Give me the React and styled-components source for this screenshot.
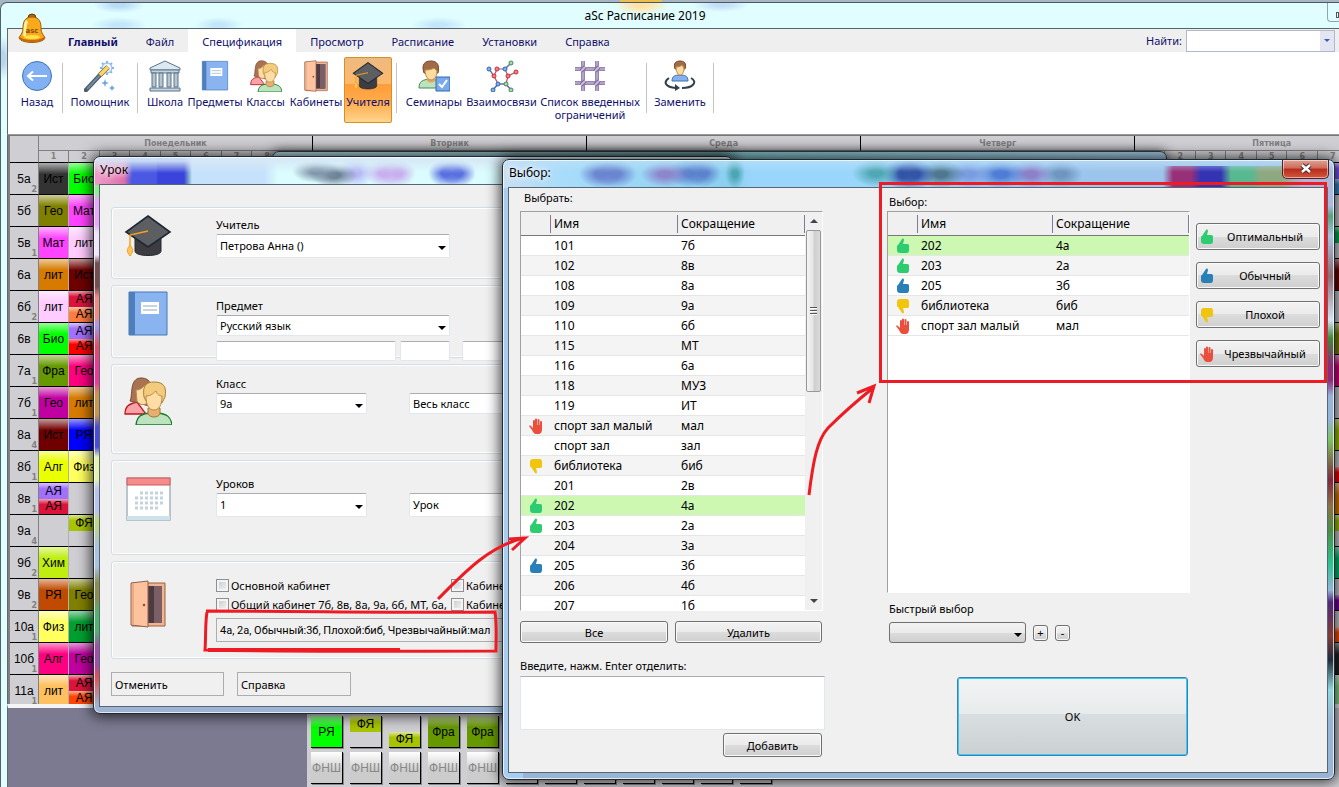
import React from 'react';
import styled, { createGlobalStyle, css } from 'styled-components';

const GlobalStyle = createGlobalStyle`
  * {
    box-sizing: border-box;
  }
  body {
    margin: 0;
    font-family: "Noto Sans", "Open Sans", sans-serif;
    font-size: 11px;
    color: #000;
  }
  button, input, select, textarea {
    font: inherit;
    color: inherit;
    margin: 0;
  }
`

// soft spot of colour seen through the window glass
const spot = (x, y, rx, ry, color) =>
    `radial-gradient(ellipse ${rx}px ${ry}px at ${x}px ${y}px, ${color} 0, ${color} 25%, transparent 100%)`;

/* ---------- drawings ---------- */

const CapIcon = ({ size = 48 }) => (
    <svg width={size} height={size} viewBox="0 0 48 48" aria-hidden="true">
      <path d="M11 22v17c0 6 26 6 26 0V22z" fill="#3c3c41" stroke="#222a33" />
      <path d="M24 4L46 20 24 35 2 20z" fill="#5d5e62" stroke="#1e2833" strokeWidth="1.6" />
      <path d="M24 19L6 23v12" fill="none" stroke="#f5a11e" strokeWidth="1.5" />
      <path d="M6 33c4 5 3 7 0 11-3-4-4-6 0-11z" fill="#ffc45c" stroke="#f5a11e" />
    </svg>
);

const BookIcon = ({ size = 48 }) => (
    <svg width={size} height={size} viewBox="0 0 48 48" aria-hidden="true">
      <path d="M5 2h38v43H5z" fill="#8ab4f0" stroke="#4478b8" />
      <path d="M5 2h6v43H5z" fill="#4f7fbb" />
      <path d="M17 12h18v12H17z" fill="#fff" />
      <path d="M19 16h14M19 20h14" stroke="#b6c8d4" strokeWidth="1.5" />
    </svg>
);

const PeopleIcon = ({ size = 48 }) => (
    <svg width={size} height={size} viewBox="0 0 48 48" aria-hidden="true">
      <path d="M1 37c0-8 4-10 12-12l9 12z" fill="#f9a3a8" stroke="#c0141c" strokeWidth="1.3" />
      <path d="M6 24C9 19 5 1 17 1c5 0 8 2 10 6l-2 22-11-3z" fill="#a97352" stroke="#7c4a32" />
      <path d="M12 13c5 0 7-3 9-5l3 17c-3 4-9 3-11-1z" fill="#ffdda5" stroke="#b98a4a" />
      <path d="M12 48c1-9 5-11 14-12h8c9 1 13 4 14 12z" fill="#bce2be" stroke="#137a2c" strokeWidth="1.3" />
      <path d="M24 31h12v6c-2 4-10 4-12 0z" fill="#e5b070" stroke="#a87332" />
      <path d="M20 20C18 8 23 5 30 5c9 0 13 4 11 15l-3 6H23z" fill="#f2cb7c" stroke="#a98138" />
      <path d="M22 19c6 0 8-4 10-5 1 4 4 5 6 5 0 9-3 14-8 14s-8-5-8-14z" fill="#ffdda5" stroke="#b98a4a" />
    </svg>
);

const DoorIcon = ({ size = 48 }) => (
    <svg width={size} height={size} viewBox="0 0 48 48" aria-hidden="true">
      <path d="M8 3h33v43H8z" fill="#f3b48e" stroke="#94604a" />
      <path d="M20 6h18v37H20z" fill="#4d3b42" />
      <path d="M30 6h8v37h-8z" fill="#7b5f66" />
      <path d="M7 3L24 1v46L7 45z" fill="#fdc29e" stroke="#94604a" />
      <path d="M9 4v40" stroke="#d8946e" />
      <circle cx="20" cy="25" r="1.3" fill="#94502f" />
    </svg>
);

const CalendarIcon = ({ size = 48 }) => (
    <svg width={size} height={size} viewBox="0 0 48 48" aria-hidden="true">
      <path d="M3 3h43v42H3z" fill="#fff" stroke="#a4b2bf" strokeWidth="1.5" />
      <path d="M3 41h43v4H3z" fill="#cfe2ec" />
      <path d="M3 3h43v7H3z" fill="#f58b8b" stroke="#cf5a5f" />
      <path d="M16 18h23M11 23h28M11 28h28M11 33h23" stroke="#c4d2e0" strokeWidth="3" strokeDasharray="3 2" />
    </svg>
);

const BackIcon = () => (
    <svg width="32" height="32" viewBox="0 0 32 32" aria-hidden="true">
      <circle cx="16" cy="16" r="14.5" fill="#82b1f3" stroke="#3e75b3" />
      <path d="M26 16H8M12 11.5L7 16l5 4.500" fill="none" stroke="#fff" strokeWidth="2" />
    </svg>
);

const WandIcon = () => (
    <svg width="32" height="32" viewBox="0 0 32 32" aria-hidden="true">
      <path d="M23 1v14M16 8h14M18 3l10 10M28 3L18 13" stroke="#86b4ef" strokeWidth="2" strokeDasharray="2 1" />
      <circle cx="23" cy="8" r="5" fill="#e9f4ff" stroke="#7fb0ec" />
      <path d="M2 30L17 14" stroke="#495c6c" strokeWidth="4.500" strokeLinecap="round" />
      <path d="M3 29L17 14" stroke="#75899a" strokeWidth="2" />
      <path d="M16 15l8-8" stroke="#8c6b1f" strokeWidth="5" />
      <path d="M16 15l8-8" stroke="#fbd66e" strokeWidth="3.500" />
      <path d="M21 19l1 3 3 1-3 1-1 3-1-3-3-1 3-1zM28 25l1 2 2 1-2 1-1 2-1-2-2-1 2-1z" fill="#6ea4ea" />
    </svg>
);

const SchoolIcon = () => (
    <svg width="34" height="32" viewBox="0 0 34 32" aria-hidden="true">
      <path d="M2 10v-2L17 1l15 7v2z" fill="#dce9f2" stroke="#5a7286" />
      <path d="M3 10h28v3H3zM2 28h30v3H2z" fill="#c3d4e0" stroke="#5a7286" />
      <path d="M4 13h4v14H4zM11 13h4v14h-4zM19 13h4v14h-4zM26 13h4v14h-4z" fill="#b4c6d3" stroke="#5a7286" />
    </svg>
);

const SeminarIcon = () => (
    <svg width="32" height="32" viewBox="0 0 32 32" aria-hidden="true">
      <path d="M1 28c0-7 4-8 10-9h4c4 1 7 3 8 9z" fill="#bce2be" stroke="#438a58" />
      <path d="M6 13C3 4 7 1 13 1s9 4 7 12z" fill="#a06b45" stroke="#74482d" />
      <path d="M9 18h8v3c-2 2-6 2-8 0z" fill="#e5a862" />
      <path d="M7 10c4 0 8-1 9-2l3 3c0 6-3 9-6 9s-6-4-6-10z" fill="#ffdb9e" stroke="#b98a4a" />
      <path d="M18 17h14v14H18z" fill="#78a9ee" stroke="#3268ad" />
      <path d="M21 24l3 3 5-7" fill="none" stroke="#fff" strokeWidth="2" />
    </svg>
);

const NetIcon = () => (
    <svg width="34" height="32" viewBox="0 0 34 32" aria-hidden="true">
      <path d="M4 9l5 7 4 8-5 6M9 16l3-7M20 9l3 7 8-4M23 16l-2 8M13 24h8l5 6M20 9l6-6" fill="none" stroke="#b5566a" strokeWidth="1.2" />
      <path d="M12 9h8M13 24l-5 6M4 9l5 7M20 9l6-6M13 24h8l5 6" fill="none" stroke="#4a7cb8" strokeWidth="1.2" />
      <g fill="#7db0f5" stroke="#3169a9"><circle cx="4" cy="9" r="2" /><circle cx="20" cy="9" r="2" /><circle cx="13" cy="24" r="2" /><circle cx="8" cy="30" r="2" /></g>
      <g fill="#f57f83" stroke="#cc2b34"><circle cx="12" cy="9" r="2" /><circle cx="9" cy="16" r="2" /><circle cx="23" cy="16" r="2" /><circle cx="31" cy="12" r="2" /></g>
      <g fill="#a9d9b4" stroke="#3d8a55"><circle cx="26" cy="3" r="2" /><circle cx="21" cy="24" r="2" /><circle cx="26" cy="30" r="2" /></g>
    </svg>
);

const GridIcon = () => (
    <svg width="32" height="32" viewBox="0 0 32 32" aria-hidden="true">
      <path d="M9 1v30M23 1v30M1 9h30M1 23h30" stroke="#9583b0" strokeWidth="4" />
      <path d="M9 1v30M23 1v30M1 9h30M1 23h30" stroke="#b5a3cb" strokeWidth="2" />
      <path d="M7 11l4-4M21 11l4-4M7 25l4-4M21 25l4-4" stroke="#7a6796" strokeWidth="4" />
      <path d="M7 11l4-4M21 11l4-4M7 25l4-4M21 25l4-4" stroke="#cbbbdc" strokeWidth="2" />
    </svg>
);

const ReplaceIcon = () => (
    <svg width="32" height="32" viewBox="0 0 32 32" aria-hidden="true">
      <path d="M8 21c0-5 3-6 8-6s8 1 8 6z" fill="#86b1f0" stroke="#3d6fae" />
      <path d="M11 9c-2-6 1-8 5-8s7 2 5 8z" fill="#a06b45" stroke="#74482d" />
      <path d="M12 7c3 0 5-1 6-2l2 3c0 5-2 7-4 7s-4-3-4-8z" fill="#ffdb9e" stroke="#b98a4a" />
      <path d="M5 18c-6 4-4 9 7 10M27 18c7 4 2 10-9 10" fill="none" stroke="#33414e" strokeWidth="2" />
      <path d="M11 24l5 4-5 3z" fill="#33414e" />
    </svg>
);

const BellIcon = () => (
    <svg width="28" height="32" viewBox="0 0 28 32" aria-hidden="true">
      <circle cx="14" cy="5" r="4" fill="#b46c08" stroke="#5c3206" />
      <path d="M14 4c-8 0-9 6-9 11 0 6-3 7-4 10 2 6 24 6 26 0-1-3-4-4-4-10 0-5-1-11-9-11z" fill="#f9a91a" stroke="#a05c06" />
      <path d="M9 8c-3 4-1 11-3 15" fill="none" stroke="#fff3a0" strokeWidth="3" />
      <path d="M2 25c4 4 20 4 24 0" fill="none" stroke="#c2690c" strokeWidth="2" />
      <ellipse cx="14" cy="24" rx="8" ry="2" fill="#ffe04a" />
      <text x="14" y="20" textAnchor="middle" fontSize="7" fontWeight="bold" fontFamily="DejaVu Sans" fill="#8a5208">asc</text>
    </svg>
);

const Thumb = ({ color, down }) => (
    <svg width="14" height="16" viewBox="0 0 14 16" aria-hidden="true">
      <path
        transform={down ? 'matrix(1 0 0 -1 0 16)' : undefined}
        d="M1 9c0-1 0-2 1-2l2-3 2-3c1-1 2 0 2 1L7 6h4c2 0 2 1 2 2v4c0 2-1 3-2 3H4c-2 0-3-1-3-3z"
        fill={color}
      />
    </svg>
);

const HandIcon = () => (
    <svg width="14" height="16" viewBox="0 0 14 16" aria-hidden="true">
      <path d="M5 9V3M7 9V1.500M9.500 9V2M12 9V4" stroke="#ea4f3d" strokeWidth="2" strokeLinecap="round" />
      <path d="M4 7h9v4c0 3-1 5-4 5H7c-2 0-3-2-4-4L0 8c1-1 2 0 3 1l1 1z" fill="#ea4f3d" />
    </svg>
);

const marks = {
    best: <Thumb color="#2ecc71" />,
    usual: <Thumb color="#2980b9" />,
    bad: <Thumb color="#f1c40f" down />,
    stop: <HandIcon />,
};

/* ---------- main window ---------- */

const Desktop = styled.main`
  position: relative;
  display: flex;
  flex-direction: column;
  height: 100vh;
  overflow: hidden;
  padding-top: 2px;
  background: linear-gradient(90deg, #a7b5c4 0 620px, #edbd55 620px 662px, #a7b5c4 662px);
`
const MainWindow = styled.section`
  flex: 1;
  min-height: 0;
  display: flex;
  flex-direction: column;
  padding-left: 6px;
  border-left: 1px solid #555f66;
  border-top: 1px solid #4d5960;
  border-top-left-radius: 7px;
  background:
    ${spot(118, 2, 26, 8, '#b9dcf6')},
    ${spot(118, 22, 28, 8, '#c3e6fa')},
    ${spot(218, 22, 24, 8, '#c3e6fa')},
    ${spot(438, 22, 28, 8, '#c3e6fa')},
    ${spot(640, 2, 28, 10, '#ffe3a6')},
    ${spot(720, 2, 28, 7, '#c3dff8')},
    ${spot(2, 55, 8, 22, '#b5d4ee')},
    #e0feff;
`
const TitleBar = styled.header`
  position: relative;
  display: flex;
  align-items: center;
  justify-content: center;
  height: 25px;
  padding-right: 56px;
  font-size: 12px;
  flex-shrink: 0;
`
const WinButton = styled.button`
  position: absolute;
  right: 0;
  top: 0;
  width: 12px;
  height: 19px;
  border: 1px solid #93a5a8;
  border-width: 0 0 1px 1px;
  border-bottom-left-radius: 4px;
  background: none;
  padding: 0;
  &::after {
    content: '';
    display: block;
    margin: 6px 0 0 8px;
    height: 4px;
    border: 1px solid #555;
  }
`
const Logo = styled.div`
  position: absolute;
  left: 18px;
  top: 13px;
`
const MenuBar = styled.nav`
  display: flex;
  flex-shrink: 0;
  height: 24px;
  padding-left: 46px;
  border-top: 1px solid #566;
  border-left: 1px solid #666;
  background: #efefef;
  color: #10106c;
  font-size: 11px;
`
const MenuTab = styled.button`
  padding: 2px 14px 0;
  border: 0;
  background: ${(props) => (props.$active ? '#fff' : 'transparent')};
  font-weight: ${(props) => (props.$bold ? 'bold' : 'normal')};
`
const Search = styled.div`
  display: flex;
  align-items: center;
  margin-left: auto;
  margin-right: 4px;
  gap: 4px;
`
const SearchBox = styled.span`
  display: flex;
  width: 149px;
  height: 22px;
  border: 1px solid #b0b8cc;
  background: #fff;
  input {
    flex: 1;
    min-width: 0;
    border: 0;
    outline: 0;
  }
  button {
    width: 14px;
    padding: 0;
    border: 0;
    background: #e3e6f2;
    display: grid;
    place-items: center;
  }
`
const Ribbon = styled.div`
  display: flex;
  flex-shrink: 0;
  height: 83px;
  padding: 5px 0 0 6px;
  border-left: 1px solid #666;
  border-bottom: 1px solid #999;
  background: #fff;
  color: #10106c;
`
const RibbonButton = styled.button`
  display: flex;
  flex-direction: column;
  align-items: center;
  gap: 2px;
  width: ${(props) => props.$width}px;
  height: 66px;
  padding: 2px 0 0;
  border: 1px solid transparent;
  background: none;
  line-height: 13px;
  span {
    width: max-content;
    max-width: 106px;
    margin-top: 1px;
  }
  ${(props) => props.$active && css`
    margin-left: 3px;
    border-color: #d79021;
    border-radius: 2px;
    background: linear-gradient(#eeb981 0, #fdb96c 40%, #ff9d3a 41%, #ffad4e 70%, #ffd48c);
  `}
`
const Divider = styled.i`
  width: 1px;
  height: 50px;
  margin: 6px ${(props) => props.$gap || 2}px 0;
  background: #c4c4c4;
`
const Caret = styled.i`
  width: 0;
  height: 0;
  border: ${(props) => props.$size || 4}px solid transparent;
  border-bottom-width: 0;
  border-top-color: ${(props) => props.$color || '#000'};
`

/* ---------- timetable ---------- */

const Board = styled.div`
  flex-shrink: 0;
  height: 569px;
  padding-left: 2px;
  overflow: hidden;
  border-left: 1px solid #666;
  border-top: 1px solid #777;
  background: #808080;
`
const Timetable = styled.table`
  width: 1399px;
  table-layout: fixed;
  border-collapse: separate;
  border-spacing: 0;
  background: #cfced3;
  font-family: "Liberation Sans", Arial, sans-serif;
  font-size: 12px;
  th, td {
    padding: 0;
  }
`
const DayHead = styled.th`
  height: 15px;
  border-right: 1px solid #000;
  border-bottom: 1px solid #808080;
  font: bold 8px "DejaVu Sans", sans-serif;
  color: #808080;
`
const HourHead = styled.th`
  height: 12px;
  border-right: 1px solid #808080;
  border-bottom: 1px solid #000;
  font: bold 8px "DejaVu Sans", sans-serif;
  color: #808080;
`
const ClassHead = styled.th`
  position: relative;
  height: 32px;
  border-right: 1px solid #808080;
  border-bottom: 1px solid #000;
  font-weight: normal;
  small {
    position: absolute;
    right: 1px;
    bottom: 0;
    font: bold 8px "DejaVu Sans", sans-serif;
    color: #808080;
  }
`
const Slot = styled.td`
  height: 32px;
  border-right: 1px solid #b0b0b0;
  border-bottom: 1px solid #000;
`
const Lessons = styled.div`
  display: flex;
  flex-direction: column;
  height: 31px;
`
const Lesson = styled.div`
  flex: 1;
  display: grid;
  place-items: center;
  overflow: hidden;
  line-height: 14px;
  background: ${(props) => (props.$color ? `linear-gradient(rgba(255, 255, 255, 0.6), transparent 36%), ${props.$color}` : 'none')};
`

// each slot is a list of [subject, colour] pairs, one above the other
const timetable = [
    ['5а', 2, [['Ист', '#333']], [['Био', '#0f0']], [['', '#7a55ee'], ['', '#3a8ad0']]],
    ['5б', '', [['Гео', '#808000']], [['Мат', '#f4f']], []],
    ['5в', 1, [['Мат', '#f4f']], [['лит', '#fcf']], [['', '#00b050'], []]],
    ['6а', '', [['лит', '#d67b00']], [['Ист', '#700000']], [['', '#700000']]],
    ['6б', 2, [['лит', '#fcf']], [['АЯ', '#dc143c'], ['АЯ', '#ff7d40']], []],
    ['6в', '', [['Био', '#0f0']], [['АЯ', '#a070ff'], ['АЯ', '#f00']], [['', '#808000']]],
    ['7а', 1, [['Фра', '#669900']], [['Гео', '#ff0080']], [['', '#e0007c']]],
    ['7б', 1, [['Гео', '#c000a0']], [['лит', '#d67b00']], []],
    ['8а', 4, [['Ист', '#700000']], [['РЯ', '#00f']], [['', '#a5c400']]],
    ['8б', 1, [['Алг', '#eaff00']], [['Физ', '#ffff60']], [[], ['', '#f00']]],
    ['8в', 1, [['АЯ', '#a070ff'], ['АЯ', '#dc143c']], [], [['', '#e07b00']]],
    ['9а', 4, [], [['ФЯ', '#a8c400'], []], [['', '#a8c400'], []]],
    ['9б', 2, [['Хим', '#bfee10']], [], [['', '#00c070']]],
    ['9в', 2, [['РЯ', '#c04a00']], [['Гео', '#808000']], [[], ['', '#7a00a0']]],
    ['10а', 1, [['Физ', '#ffff60']], [['лит', '#00a030']], [[], ['', '#ff5000']]],
    ['10б', 1, [['Алг', '#ff0080']], [['Гео', '#c000a0']], [['', '#222']]],
    ['11а', 1, [['лит', '#ffc060']], [['АЯ', '#dc143c'], ['АЯ', '#ff4500']], [['', '#90d890']]],
];
const days = ['Понедельник', 'Вторник', 'Среда', 'Четверг', 'Пятница'];
const hours = [1, 2, 3, 4, 5, 6, 7, 8, 9];

const SlotCell = ({ lessons }) => (
    <Slot>
      <Lessons>
        {lessons.map(([name, color], i) => <Lesson key={i} $color={color}>{name}</Lesson>)}
      </Lessons>
    </Slot>
);

const Shelf = styled.div`
  flex: 1;
  min-height: 0;
  display: flex;
  border-top: 4px solid #f4f4f4;
  border-left: 1px solid #666;
  background: #7b7a90;
`
const CardGrid = styled.div`
  flex: 1;
  margin-left: 299px;
  padding: 8px 4px;
  display: flex;
  flex-direction: column;
  gap: 4px;
  overflow: hidden;
  background: #cfced3;
  font-family: "Liberation Sans", Arial, sans-serif;
  font-size: 12px;
`
const CardRow = styled.div`
  display: flex;
  gap: 7px;
`
const Card = styled.div`
  display: flex;
  flex-direction: column;
  width: 32px;
  height: 32px;
  flex-shrink: 0;
  border-right: 1px solid #000;
  border-bottom: 1px solid #000;
  box-shadow: 1px 1px 0 #888;
  color: ${(props) => (props.$blank ? '#888' : '#000')};
  background: ${(props) => (props.$blank ? 'linear-gradient(#fff, #ccc 60%)' : '#cfced3')};
`
const shelf = [
    [['РЯ', '#0f0']],
    [['ФЯ', '#a8c400'], []],
    [[], ['ФЯ', '#a8c400']],
    [['Фра', '#669900']],
    [['Фра', '#669900']],
];

/* ---------- dialogs ---------- */

const BackWindow = styled.div`
  position: absolute;
  left: 272px;
  top: 151px;
  width: 895px;
  height: 500px;
  border: 1px solid #2d3b45;
  border-radius: 7px 7px 0 0;
  box-shadow: 0 0 12px rgba(0, 0, 0, 0.7);
  background: linear-gradient(90deg, #b8dbe8, #7ab6bd 50%, #9dc3dc);
`
const Dialog = styled.section`
  position: absolute;
  padding: 0 6px 6px 5px;
  border: 1px solid #1f2a33;
  border-radius: 7px;
  box-shadow: inset 0 0 0 1px rgba(255, 255, 255, 0.7), 0 0 14px 2px rgba(0, 0, 0, 0.75);
`
const LessonDialog = styled(Dialog)`
  left: 93px;
  top: 156px;
  width: 640px;
  background:
    linear-gradient(rgba(214, 232, 246, 0.9) 4px, rgba(214, 232, 246, 0) 16px) 0 0 / 100% 28px no-repeat,
    ${spot(222, 14, 24, 12, '#8296aa')},
    ${spot(240, 18, 24, 12, '#6f8298')},
    ${spot(262, 15, 18, 16, '#b6b8f6')},
    ${spot(290, 16, 20, 14, '#c8b0ee')},
    ${spot(304, 16, 18, 14, '#c8b0ee')},
    ${spot(352, 16, 18, 14, '#5a70e0')},
    ${spot(364, 16, 18, 14, '#5a70e0')},
    linear-gradient(90deg, #ec9ac8 4px, #e070ac 30px, #4b58e4 38px 62px, #3a44dc 64px 90px, transparent 98px) 0 0 / 100% 28px no-repeat,
    linear-gradient(90deg, transparent 90px, #c5e1fb 98px 170px, #dcfdff 184px 400px) 0 0 / 100% 28px no-repeat,
    linear-gradient(#d6dbe8 6px, #8cf08c 20px 36px, #e8a8f8 42px 68px, #f3e4fb 76px 98px, #7a4d4d 106px 130px,
      #ee8b80 140px 160px, #a99aee 168px, #e05060 190px, #ee3a96 208px 226px, #c99650 236px 258px,
      #4a4ae0 270px 290px, #e6f3b0 300px 322px, #b8c4ee 332px 354px, #c3d878 364px, #a9c2dd 390px 410px,
      #8d8d50 426px 442px, #50b470 456px 474px, #a050a8 490px 508px, #e05050 520px, #9fb4d2 548px);
`
const PickDialog = styled(Dialog)`
  left: 502px;
  right: 4px;
  top: 159px;
  background:
    linear-gradient(rgba(190, 225, 248, 0.7), rgba(190, 225, 248, 0) 12px) 0 0 / 100% 28px no-repeat,
    ${spot(98, 14, 22, 14, '#6a86d0')},
    ${spot(112, 14, 22, 14, '#6a86d0')},
    ${spot(162, 14, 24, 13, '#8c86cc')},
    ${spot(186, 13, 22, 14, '#5b83cc')},
    ${spot(200, 13, 18, 14, '#5b83cc')},
    ${spot(232, 13, 10, 16, '#4ba5b2')},
    ${spot(373, 13, 24, 14, '#50a8b4')},
    ${spot(400, 14, 20, 15, '#3355a8')},
    ${spot(412, 14, 20, 15, '#3355a8')},
    ${spot(438, 14, 24, 14, '#4f7890')},
    ${spot(466, 14, 24, 14, '#7a9ce0')},
    ${spot(498, 14, 26, 14, '#4f7cd4')},
    ${spot(528, 14, 22, 14, '#8c80c8')},
    ${spot(558, 14, 22, 14, '#6e96be')},
    linear-gradient(90deg, transparent 660px, #983078 670px 688px, #3333b4 698px 718px, #58b890 728px 748px, #90a880 758px 778px, #b9aed8 800px, #a9b9d8) 0 6px / 100% 22px no-repeat,
    linear-gradient(90deg, #c9def2, #a8dcfa 60px, #8acff0 230px, #9ad6fc 250px 360px, #9cc4ec 600px, #9cc4ec) 0 0 / 100% 28px no-repeat,
    linear-gradient(#a9cdf0, #a9cdf0) 0 0 / 20px 100% no-repeat,
    linear-gradient(#a9bce0 46px, #58a07c 56px, #a9c4e0 76px, #8d6a74 116px, #d6e4f4 160px, #40883a 178px, #90287c 206px 220px,
      #96b4d6 236px 260px, #80c060 280px, #80283c 320px, #8c7048 346px, #4c8c40 370px, #2cc490 404px, #96b4d6 430px,
      #502878 442px, #803c38 476px, #202c3c 500px, #92d8dc 530px, #9ab4d4 560px);
`
const DialogTitle = styled.h2`
  height: 27px;
  margin: 0;
  padding: 5px 0 0 1px;
  font-size: 12px;
  font-weight: normal;
  line-height: 16px;
  text-shadow: 0 0 6px #fff, 0 0 6px #fff;
`
const CloseButton = styled.button`
  position: absolute;
  right: 5px;
  top: 0;
  width: 47px;
  height: 19px;
  padding: 0;
  border: 1px solid #53202a;
  border-top: 0;
  border-radius: 0 0 5px 5px;
  box-shadow: inset 0 0 0 1px rgba(255, 255, 255, 0.5);
  background: linear-gradient(#e0a194, #cf6a59 45%, #b52d1b 50%, #d4573b);
`
const Client = styled.div`
  border: 1px solid #566672;
  background: #f0f0f0;
`
const LessonForm = styled(Client)`
  padding: 22px 11px 10px;
`
const Group = styled.fieldset`
  display: flex;
  height: ${(props) => props.$height}px;
  margin: 0 0 6px;
  padding: 0 0 0 12px;
  border: 1px solid #d3dde6;
  border-radius: 3px;
  box-shadow: inset 0 0 0 1px #fff;
  min-width: 0;
`
const GroupIcon = styled.div`
  width: 92px;
  padding-top: ${(props) => props.$top || 4}px;
`
const Fields = styled.div`
  padding-top: ${(props) => props.$top}px;
  label {
    display: block;
    line-height: 15px;
    margin-bottom: 2px;
  }
`
const FieldRow = styled.div`
  display: flex;
  gap: ${(props) => props.$gap || 42}px;
`
const SelectWrap = styled.span`
  position: relative;
  display: block;
  width: ${(props) => props.$width}px;
  select {
    appearance: none;
    display: block;
    width: 100%;
    height: ${(props) => props.$height || 21}px;
    padding: 0 16px 1px 3px;
    border: 1px solid #e2e6ee;
    border-top-color: #abadb3;
    border-radius: 2px;
    background: #fff;
    ${(props) => props.$raised && css`
      border: 1px solid #707070;
      border-radius: 3px;
      background: linear-gradient(#f2f2f2, #ebebeb 50%, #dcdcdc 50%, #cfcfcf);
    `}
  }
  ${Caret} {
    position: absolute;
    right: 4px;
    top: 50%;
  }
`
const TextField = styled.input`
  width: ${(props) => props.$width}px;
  height: 20px;
  margin-top: 5px;
  border: 1px solid #e2e6ee;
  border-top-color: #abadb3;
  border-radius: 2px;
  background: #fff;
`
const Check = styled.div`
  display: flex;
  align-items: center;
  gap: 2px;
  width: 234px;
  height: 19px;
  overflow: hidden;
  white-space: nowrap;
  label {
    margin: 0;
  }
  input {
    appearance: none;
    flex-shrink: 0;
    width: 13px;
    height: 13px;
    border: 1px solid #8e8f8f;
    background: linear-gradient(135deg, #c4c8cd, #f6f6f6);
    box-shadow: inset 0 0 0 2px #f4f4f4;
  }
`
const FlatButton = styled.button`
  width: ${(props) => props.$width}px;
  height: 24px;
  padding: 0 3px;
  border: 1px solid #adadad;
  background: #f0f0f0;
  text-align: left;
  white-space: nowrap;
`
const RoomsButton = styled(FlatButton)`
  margin-top: 4px;
  font-family: Roboto, sans-serif;
`
const Footer = styled.div`
  display: flex;
  gap: 13px;
  padding-top: 7px;
`
const Button = styled.button`
  display: flex;
  align-items: center;
  justify-content: center;
  width: ${(props) => props.$width}px;
  height: ${(props) => props.$height || 22}px;
  padding: 0;
  border: 1px solid #707070;
  border-radius: 3px;
  box-shadow: inset 0 0 0 1px #fafafa;
  background: linear-gradient(#f2f2f2, #ebebeb 50%, #dcdcdc 50%, #cfcfcf);
`
const MarkButton = styled(Button)`
  padding: 0 3px;
  span {
    flex: 1;
    text-align: center;
  }
`
const OkButton = styled(Button)`
  margin: 34px 0 0 70px;
  border-color: #3c7fb1;
  box-shadow: inset 0 0 0 1px #35cbf5;
  background: linear-gradient(#f2f4f4, #e8ebec 47%, #d9dfe1 47%, #cbd1d3);
`
const PickForm = styled(Client)`
  display: flex;
  align-items: flex-start;
  gap: 63px;
  padding: 3px 6px 15px 11px;
`
const Column = styled.div`
  display: flex;
  flex-direction: column;
  width: ${(props) => props.$width || 'auto'};
  padding-top: ${(props) => props.$top || 0}px;
  flex-shrink: 0;
`
const Caption = styled.label`
  display: block;
  height: 14px;
  line-height: 14px;
  margin: ${(props) => props.$space || '0'};
`
const ListBox = styled.div`
  display: flex;
  width: 303px;
  height: ${(props) => props.$height}px;
  overflow: hidden;
  border: 1px solid #a0a0a0;
  border-right-color: #fff;
  border-bottom-color: #fff;
  background: #fff;
`
const Rooms = styled.table`
  flex: 1;
  align-self: flex-start;
  table-layout: fixed;
  border-collapse: separate;
  border-spacing: 0;
  font-size: 12px;
  th {
    height: 24px;
    padding: 2px 0;
    border-bottom: 1px solid #777;
    background: #f0f0f0;
    font-size: 12px;
    font-weight: normal;
    text-align: left;
  }
  th span {
    display: block;
    height: 18px;
    padding-left: 3px;
    border-left: 1px solid #7e7a9e;
    line-height: 18px;
  }
  th:last-child span {
    border-right: 1px solid #7e7a9e;
  }
  td {
    height: 20px;
    padding: 0 0 0 4px;
    border-bottom: 1px solid #e6e6e6;
    line-height: 19px;
    white-space: nowrap;
  }
  td:first-child {
    padding-left: 8px;
  }
  svg {
    display: block;
  }
`
const RoomRow = styled.tr`
  background: #fff;
  &:nth-child(even) {
    background: #f4f4f4;
  }
  &&[aria-selected='true'] {
    background: #ccf8b2;
  }
`
const ScrollBar = styled.div`
  display: flex;
  flex-direction: column;
  align-items: center;
  width: 17px;
  padding: 0 1px;
  background: #f0f0f0;
  button {
    display: grid;
    place-items: center;
    width: 15px;
    height: 18px;
    padding: 0;
    border: 0;
    background: none;
  }
  button:first-child i {
    transform: rotate(180deg);
  }
  button:last-child {
    margin-top: auto;
  }
`
const ScrollThumb = styled.div`
  display: grid;
  place-items: center;
  width: 15px;
  height: 162px;
  border: 1px solid #979797;
  border-radius: 2px;
  background: linear-gradient(90deg, #f4f4f4, #e6e6e6 45%, #cfcfcf 55%, #dadada);
  &::after {
    content: '';
    width: 7px;
    height: 8px;
    background: repeating-linear-gradient(#555 0 1px, #fff 1px 2px, transparent 2px 3px);
  }
`
const Row = styled.div`
  display: flex;
  gap: ${(props) => props.$gap || 7}px;
  align-items: ${(props) => props.$align || 'stretch'};
  margin-top: ${(props) => props.$top || 0}px;
`
const QuickRow = styled(Row)`
  padding-left: 2px;
`
const Marks = styled.div`
  display: flex;
  flex-direction: column;
  gap: 12px;
  padding-top: 12px;
`
const Notes = styled.textarea`
  display: block;
  width: 305px;
  height: 54px;
  margin-bottom: 3px;
  border: 1px solid #e2e6ee;
  border-top-color: #abadb3;
  resize: none;
`
const AddButton = styled(Button)`
  align-self: flex-end;
  margin-right: 2px;
`
const Markup = styled.svg`
  position: absolute;
  left: 0;
  top: 0;
  width: 1339px;
  height: 787px;
  pointer-events: none;
`

const allRooms = [
    ['101', '7б'], ['102', '8в'], ['108', '8а'], ['109', '9а'], ['110', '6б'],
    ['115', 'МТ'], ['116', '6а'], ['118', 'МУЗ'], ['119', 'ИТ'],
    ['спорт зал малый', 'мал', 'stop'],
    ['спорт зал', 'зал'],
    ['библиотека', 'биб', 'bad'],
    ['201', '2в'],
    ['202', '4а', 'best'],
    ['203', '2а', 'best'],
    ['204', '3а'],
    ['205', '3б', 'usual'],
    ['206', '4б'],
    ['207', '1б'],
];
const chosenRooms = [
    ['202', '4а', 'best'],
    ['203', '2а', 'best'],
    ['205', '3б', 'usual'],
    ['библиотека', 'биб', 'bad'],
    ['спорт зал малый', 'мал', 'stop'],
];

const RoomTable = ({ rooms, nameWidth }) => (
    <Rooms>
      <colgroup><col style={{ width: 29 }} /><col style={{ width: nameWidth }} /><col /></colgroup>
      <thead>
        <tr><th /><th><span>Имя</span></th><th><span>Сокращение</span></th></tr>
      </thead>
      <tbody>
        {rooms.map(([name, short, mark]) => (
          <RoomRow key={name} aria-selected={name === '202'}>
            <td>{marks[mark]}</td><td>{name}</td><td>{short}</td>
          </RoomRow>
        ))}
      </tbody>
    </Rooms>
);

const Select = ({ id, label, width, height, value, raised }) => (
    <SelectWrap $width={width} $height={height} $raised={raised}>
      <select id={id} aria-label={label} defaultValue={value}><option>{value}</option></select>
      <Caret />
    </SelectWrap>
);

const CheckBox = ({ id, children }) => (
    <Check><input type="checkbox" id={id} /><label htmlFor={id}>{children}</label></Check>
);

const LessonWindow = () => (
    <LessonDialog>
      <DialogTitle>Урок</DialogTitle>
      <LessonForm>
        <Group $height={72}>
          <GroupIcon><CapIcon /></GroupIcon>
          <Fields $top={9}>
            <label htmlFor="teacher">Учитель</label>
            <Select id="teacher" width={234} height={24} value="Петрова Анна ()" />
          </Fields>
        </Group>
        <Group $height={73}>
          <GroupIcon><BookIcon /></GroupIcon>
          <Fields $top={12}>
            <label htmlFor="subject">Предмет</label>
            <Select id="subject" width={234} value="Русский язык" />
            <FieldRow $gap={4}>
              <TextField $width={180} aria-label="Длина" />
              <TextField $width={50} aria-label="Число" />
              <TextField $width={60} aria-label="Неделя" style={{ marginLeft: 8 }} />
            </FieldRow>
          </Fields>
        </Group>
        <Group $height={90}>
          <GroupIcon $top={12}><PeopleIcon /></GroupIcon>
          <Fields $top={11}>
            <label htmlFor="class">Класс</label>
            <FieldRow>
              <Select id="class" width={151} value="9а" />
              <Select label="Группа" width={108} value="Весь класс" />
            </FieldRow>
          </Fields>
        </Group>
        <Group $height={95}>
          <GroupIcon $top={14}><CalendarIcon /></GroupIcon>
          <Fields $top={15}>
            <label htmlFor="count">Уроков</label>
            <FieldRow>
              <Select id="count" width={151} height={24} value="1" />
              <Select label="Длительность" width={108} height={24} value="Урок" />
            </FieldRow>
          </Fields>
        </Group>
        <Group $height={98}>
          <GroupIcon $top={18}><DoorIcon /></GroupIcon>
          <Fields $top={14}>
            <FieldRow $gap={1}>
              <CheckBox id="own">Основной кабинет</CheckBox>
              <CheckBox id="class-room">Кабинет класса</CheckBox>
            </FieldRow>
            <FieldRow $gap={1}>
              <CheckBox id="shared">Общий кабинет 7б, 8в, 8а, 9а, 6б, МТ, 6а,</CheckBox>
              <CheckBox id="teacher-room">Кабинет учителя</CheckBox>
            </FieldRow>
            <RoomsButton $width={300}>4а, 2а, Обычный:3б, Плохой:биб, Чрезвычайный:мал</RoomsButton>
          </Fields>
        </Group>
        <Footer>
          <FlatButton $width={113}>Отменить</FlatButton>
          <FlatButton $width={114}>Справка</FlatButton>
        </Footer>
      </LessonForm>
    </LessonDialog>
);

const PickWindow = () => (
    <PickDialog>
      <DialogTitle>Выбор:</DialogTitle>
      <CloseButton aria-label="Закрыть">
        <svg width="14" height="11" viewBox="0 0 14 11">
          <path d="M3 2l8 7M11 2L3 9" stroke="#4a2a2a" strokeWidth="4.500" />
          <path d="M3 2l8 7M11 2L3 9" stroke="#fff" strokeWidth="2.500" />
        </svg>
      </CloseButton>
      <PickForm>
        <Column $width="304px">
          <Caption as="div" $space="0 0 6px 4px">Выбрать:</Caption>
          <ListBox $height={400}>
            <RoomTable rooms={allRooms} nameWidth={127} />
            <ScrollBar>
              <button aria-label="Вверх"><Caret $color="#444" /></button>
              <ScrollThumb />
              <button aria-label="Вниз"><Caret $color="#444" /></button>
            </ScrollBar>
          </ListBox>
          <Row $top={10}>
            <Button $width={148}>Все</Button>
            <Button $width={147}>Удалить</Button>
          </Row>
          <Caption htmlFor="names" $space="16px 0 3px 0">Введите, нажм. Enter отделить:</Caption>
          <Notes id="names" />
          <AddButton $width={99} $height={24}>Добавить</AddButton>
        </Column>
        <Column $top={4}>
          <Caption as="div" $space="0 0 2px 2px">Выбор:</Caption>
          <Row $gap={6}>
            <ListBox $height={382}>
              <RoomTable rooms={chosenRooms} nameWidth={135} />
            </ListBox>
            <Marks>
              <MarkButton $width={124} $height={27}>{marks.best}<span>Оптимальный</span></MarkButton>
              <MarkButton $width={124} $height={27}>{marks.usual}<span>Обычный</span></MarkButton>
              <MarkButton $width={124} $height={27}>{marks.bad}<span>Плохой</span></MarkButton>
              <MarkButton $width={124} $height={27}>{marks.stop}<span>Чрезвычайный</span></MarkButton>
            </Marks>
          </Row>
          <Caption htmlFor="quick" $space="9px 0 6px 2px">Быстрый выбор</Caption>
          <QuickRow $align="center">
            <Select id="quick" width={137} value="" raised />
            <Button $width={15} $height={16}>+</Button>
            <Button $width={15} $height={16}>-</Button>
          </QuickRow>
          <OkButton $width={231} $height={79}>OK</OkButton>
        </Column>
      </PickForm>
    </PickDialog>
);

const App = () => {
    return (
    <>
      <GlobalStyle />
      <Desktop>
        <MainWindow>
          <TitleBar>aSc Расписание 2019<WinButton aria-label="Свернуть" /></TitleBar>
          <MenuBar>
            <MenuTab $bold>Главный</MenuTab>
            <MenuTab>Файл</MenuTab>
            <MenuTab $active>Спецификация</MenuTab>
            <MenuTab>Просмотр</MenuTab>
            <MenuTab>Расписание</MenuTab>
            <MenuTab>Установки</MenuTab>
            <MenuTab>Справка</MenuTab>
            <Search>
              <label htmlFor="find">Найти:</label>
              <SearchBox>
                <input id="find" />
                <button aria-label="Открыть список"><Caret $size={3} $color="#3a62ac" /></button>
              </SearchBox>
            </Search>
          </MenuBar>
          <Ribbon>
            <RibbonButton $width={46}><BackIcon /><span>Назад</span></RibbonButton>
            <Divider />
            <RibbonButton $width={70}><WandIcon /><span>Помощник</span></RibbonButton>
            <Divider />
            <RibbonButton $width={50}><SchoolIcon /><span>Школа</span></RibbonButton>
            <RibbonButton $width={50}><BookIcon size={32} /><span>Предметы</span></RibbonButton>
            <RibbonButton $width={51}><PeopleIcon size={32} /><span>Классы</span></RibbonButton>
            <RibbonButton $width={50}><DoorIcon size={32} /><span>Кабинеты</span></RibbonButton>
            <RibbonButton $width={48} $active><CapIcon size={32} /><span>Учителя</span></RibbonButton>
            <Divider $gap={4} />
            <RibbonButton $width={66}><SeminarIcon /><span>Семинары</span></RibbonButton>
            <RibbonButton $width={69}><NetIcon /><span>Взаимосвязи</span></RibbonButton>
            <RibbonButton $width={108}><GridIcon /><span>Список введенных<br />ограничений</span></RibbonButton>
            <Divider />
            <RibbonButton $width={62}><ReplaceIcon /><span>Заменить</span></RibbonButton>
            <Divider />
          </Ribbon>
          <Board>
            <Timetable>
              <colgroup>
                <col style={{ width: 29 }} />
                {days.map((day) => hours.map((h) => <col key={day + h} style={{ width: h % 2 ? 30 : 31 }} />))}
              </colgroup>
              <thead>
                <tr>
                  <HourHead rowSpan={2} />
                  {days.map((day) => <DayHead key={day} colSpan={9}>{day}</DayHead>)}
                </tr>
                <tr>
                  {days.map((day) => hours.map((h) => <HourHead key={day + h}>{h}</HourHead>))}
                </tr>
              </thead>
              <tbody>
                {timetable.map(([name, note, first, second, last]) => (
                  <tr key={name}>
                    <ClassHead>{name}<small>{note}</small></ClassHead>
                    <SlotCell lessons={first} />
                    <SlotCell lessons={second} />
                    <Slot colSpan={40} />
                    <SlotCell lessons={last} />
                    <Slot colSpan={2} />
                  </tr>
                ))}
              </tbody>
            </Timetable>
          </Board>
          <Shelf>
            <CardGrid>
              <CardRow>
                {shelf.map((lessons, i) => (
                  <Card key={i}>
                    {lessons.map(([name, color], j) => <Lesson key={j} $color={color}>{name}</Lesson>)}
                  </Card>
                ))}
              </CardRow>
              <CardRow>
                {Array.from({ length: 12 }, (_, i) => <Card key={i} $blank><Lesson>ФНШ</Lesson></Card>)}
              </CardRow>
            </CardGrid>
          </Shelf>
        </MainWindow>
        <Logo><BellIcon /></Logo>
        <BackWindow />
        <LessonWindow />
        <PickWindow />
        <Markup viewBox="0 0 1339 787" fill="none" stroke="#ed1c24" strokeWidth="3" aria-hidden="true">
          <path d="M880.500 183.500h445v198h-445z" />
          <path d="M207 612c-2 12-1 26-2 38 97 2 194 1 291 1 0-13 1-26-1-39-95 1-191-1-289-1" />
          <path d="M208 650h192" strokeWidth="4" />
          <path d="M438 599C465 572 487 548 523 538M509 539l16-1-13 12" />
          <path d="M809 495C813 462 817 440 828 428 842 414 858 400 873 388M857 393l17-7-5 17" />
        </Markup>
      </Desktop>
    </>
    );
}

export default App;
